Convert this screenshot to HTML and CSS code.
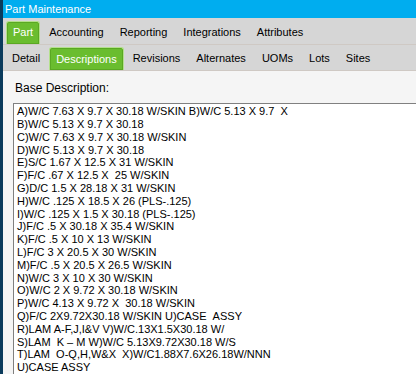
FILE: index.html
```html
<!DOCTYPE html>
<html lang="en">
<head>
    <meta charset="UTF-8" />
    <title>Part Maintenance</title>
    <link rel="stylesheet" href="styles.css">
</head>
<body>
    <div class="window">
        <div class="title-bar">Part Maintenance</div>

        <div class="tabs main-tabs">
            <button class="tab active">Part</button>
            <button class="tab">Accounting</button>
            <button class="tab">Reporting</button>
            <button class="tab">Integrations</button>
            <button class="tab">Attributes</button>
        </div>

        <div class="tabs sub-tabs">
            <button class="tab">Detail</button>
            <button class="tab active">Descriptions</button>
            <button class="tab">Revisions</button>
            <button class="tab">Alternates</button>
            <button class="tab">UOMs</button>
            <button class="tab">Lots</button>
            <button class="tab">Sites</button>
        </div>

        <div class="content">
            <label class="field-label" for="base-desc">Base Description:</label>
            <div class="desc-box" id="base-desc">
                <div>A)W/C 7.63 X 9.7 X 30.18 W/SKIN B)W/C 5.13 X 9.7 &nbsp;X</div>
                <div>B)W/C 5.13 X 9.7 X 30.18</div>
                <div>C)W/C 7.63 X 9.7 X 30.18 W/SKIN</div>
                <div>D)W/C 5.13 X 9.7 X 30.18</div>
                <div>E)S/C 1.67 X 12.5 X 31 W/SKIN</div>
                <div>F)F/C .67 X 12.5 X &nbsp;25 W/SKIN</div>
                <div>G)D/C 1.5 X 28.18 X 31 W/SKIN</div>
                <div>H)W/C .125 X 18.5 X 26 (PLS-.125)</div>
                <div>I)W/C .125 X 1.5 X 30.18 (PLS-.125)</div>
                <div>J)F/C .5 X 30.18 X 35.4 W/SKIN</div>
                <div>K)F/C .5 X 10 X 13 W/SKIN</div>
                <div>L)F/C 3 X 20.5 X 30 W/SKIN</div>
                <div>M)F/C .5 X 20.5 X 26.5 W/SKIN</div>
                <div>N)W/C 3 X 10 X 30 W/SKIN</div>
                <div>O)W/C 2 X 9.72 X 30.18 W/SKIN</div>
                <div>P)W/C 4.13 X 9.72 X &nbsp;30.18 W/SKIN</div>
                <div>Q)F/C 2X9.72X30.18 W/SKIN U)CASE &nbsp;ASSY</div>
                <div>R)LAM A-F,J,I&amp;V V)W/C.13X1.5X30.18 W/</div>
                <div>S)LAM &nbsp;K &ndash; M W)W/C 5.13X9.72X30.18 W/S</div>
                <div>T)LAM &nbsp;O-Q,H,W&amp;X &nbsp;X)W/C1.88X7.6X26.18W/NNN</div>
                <div>U)CASE ASSY</div>
            </div>
        </div>
    </div>
</body>
</html>
```

FILE: styles.css
```css
* {
    margin: 0;
    padding: 0;
    box-sizing: border-box;
}

body {
    width: 416px;
    height: 374px;
    overflow: hidden;
    background-color: #0b3b5c;
    font-family: "Liberation Sans", Arial, sans-serif;
    font-size: 12px;
    color: #000;
}

.window {
    margin-left: 3px;
    height: 374px;
    display: flex;
    flex-direction: column;
    background-color: #f5f5f5;
}

.title-bar {
    height: 18px;
    padding: 3px 0 0 2px;
    background-color: #00adef;
    color: #fff;
    font-size: 11px;
    line-height: 13px;
}

.tabs {
    display: flex;
    align-items: flex-end;
    background-color: #d6d6d6;
    border-bottom: 1px solid #cfc9c4;
}

.main-tabs {
    height: 27px;
    padding-left: 3px;
    gap: 2px;
}

.sub-tabs {
    height: 27px;
    padding-left: 2px;
    gap: 2px;
}

.tab {
    font-family: inherit;
    font-size: 11px;
    background: none;
    border: none;
    color: #000;
    height: 23px;
    padding: 0 7px;
    line-height: 23px;
    cursor: pointer;
}

.tab.active {
    background-color: #6abd2f;
    color: #fff;
    border: 1px solid #b4e08c;
    border-bottom: none;
    border-radius: 3px 3px 0 0;
    box-shadow: inset 0 0 0 1px #5aa823;
    line-height: 21px;
    padding: 0 6px;
}

.content {
    flex: 1;
    padding: 10px 0 0 10px;
    display: flex;
    flex-direction: column;
}

.field-label {
    display: block;
    height: 22px;
    padding-left: 2px;
    font-size: 12px;
    color: #000;
}

.desc-box {
    flex: 1;
    margin-right: -10px;
    background-color: #fff;
    border-top: 1px solid #808080;
    border-left: 1px solid #808080;
    padding: 1px 0 0 3px;
    font-size: 11px;
    line-height: 12.8px;
    white-space: nowrap;
    overflow: hidden;
}
```
